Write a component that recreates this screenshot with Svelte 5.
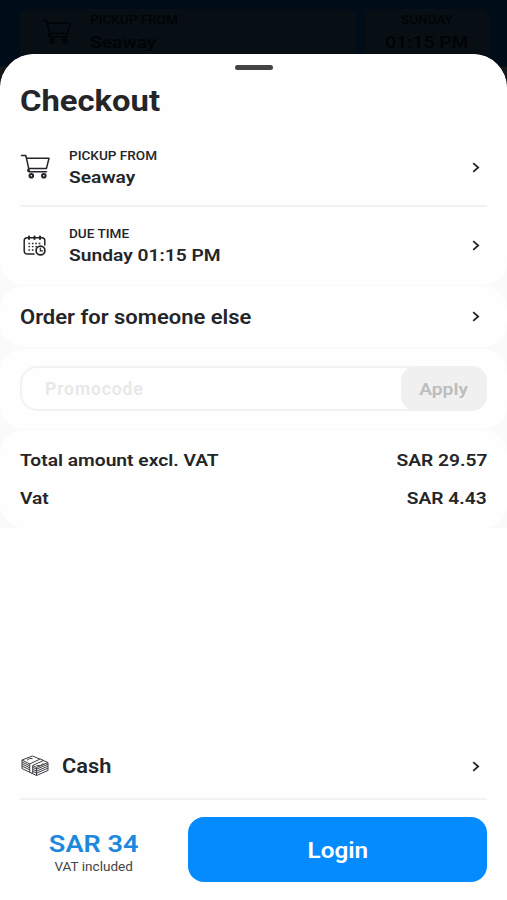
<script lang="ts">
	const details = [
		{ icon: 'cart', label: 'PICKUP FROM', value: 'Seaway' },
		{ icon: 'calendar', label: 'DUE TIME', value: 'Sunday 01:15 PM' }
	];
	const totals = [
		{ name: 'Total amount excl. VAT', amount: 'SAR 29.57' },
		{ name: 'Vat', amount: 'SAR 4.43' }
	];
	let promocode: string = $state('');
</script>

{#snippet cart()}
	<svg class="cart" width="30" height="26" viewBox="0 0 30 26" fill="none" stroke="currentColor" stroke-width="1.5" stroke-linecap="round" stroke-linejoin="round">
		<path d="M1.5 1.5h4.3l3.4 15.2M6.6 4.3h22.4l-2.6 10.3H8.8M9.2 14.6c-2 .6-1.8 3.2 0 3.2h17.3" />
		<circle cx="11.3" cy="21.7" r="1.8" stroke-width="2" />
		<circle cx="23.8" cy="21.7" r="1.8" stroke-width="2" />
	</svg>
{/snippet}

{#snippet calendar()}
	<svg width="24" height="22" viewBox="0 0 24 22" fill="none" stroke="currentColor" stroke-width="1.5" stroke-linecap="round">
		<path d="M11 19H4.5Q1.2 19 1.2 15.7V5.5Q1.2 2.7 4.2 2.7H18.8Q21.8 2.7 21.8 5.5V10" />
		<path d="M6 1.4v2.6M11.5 1.4v2.6M17 1.4v2.6" stroke-width="2" />
		<path d="M5.5 8.5h12.5M5.5 11.7h9M5.5 15h5.5" stroke-width="1.3" stroke-linecap="butt" stroke-dasharray="1.6 1.8" />
		<circle cx="17.5" cy="15.5" r="4.4" stroke-width="1.7" />
		<path d="M17.3 13v2.8h2.2" stroke-width="1.2" />
	</svg>
{/snippet}

{#snippet cash()}
	<svg width="28" height="22" viewBox="0 0 28 22" fill="none" stroke="#3c3d40" stroke-width="1" stroke-linejoin="round">
		<path d="M1 5 11.5 1 27 7.5 15.5 12.5zM1 5v8.5l14.5 7 11.5-5V7.5M15.5 12.5v8" />
		<path d="M1 7l14.5 7.2L27 9.2M1 9l14.5 7.2L27 11.2M1 11l14.5 7.2L27 13.2" />
		<path d="m8.7 9 10.5-5 3.2 1.5-10.7 5v8.2l-3-1.6z" fill="#fff" />
		<path d="M6 5.2q2.5-2.7 5.6-1.5M15.3 10.8q5 .7 7.2-2.4" />
	</svg>
{/snippet}

{#snippet chevron()}
	<svg class="chevron" width="8" height="11" viewBox="0 0 8 11" fill="none" stroke="currentColor" stroke-width="1.8">
		<path d="M1.2 1.1 6.2 5.5 1.2 9.9" />
	</svg>
{/snippet}

<div class="screen">
	<div class="behind">
		<div class="card place">
			{@render cart()}
			<div>
				<div class="small"><span class="wide">PICKUP FROM</span></div>
				<div class="value"><span class="wide">Seaway</span></div>
			</div>
		</div>
		<div class="card time">
			<div class="small"><span class="wide mid">SUNDAY</span></div>
			<div class="value"><span class="wide mid">01:15 PM</span></div>
		</div>
	</div>

	<main class="sheet">
		<section class="panel first">
			<div class="handle"></div>
			<h1><span class="wide">Checkout</span></h1>
			{#each details as detail}
				<div class="detail">
					<div class="icon">
						{#if detail.icon === 'cart'}{@render cart()}{:else}{@render calendar()}{/if}
					</div>
					<div class="grow">
						<div class="small"><span class="wide">{detail.label}</span></div>
						<div class="value"><span class="wide">{detail.value}</span></div>
					</div>
					{@render chevron()}
				</div>
			{/each}
		</section>

		<section class="panel someone">
			<div class="grow"><span class="wide">Order for someone else</span></div>
			{@render chevron()}
		</section>

		<section class="panel promo">
			<div class="field">
				<input type="text" placeholder="Promocode" bind:value={promocode} />
				<button class="apply"><span class="wide mid">Apply</span></button>
			</div>
		</section>

		<section class="panel totals">
			{#each totals as row}
				<div class="row">
					<span class="wide">{row.name}</span>
					<span class="wide end">{row.amount}</span>
				</div>
			{/each}
		</section>

		<footer>
			<div class="payment">
				{@render cash()}
				<div class="grow"><span class="wide">Cash</span></div>
				{@render chevron()}
			</div>
			<div class="pay">
				<div class="sum">
					<div class="price"><span class="wide mid">SAR 34</span></div>
					<div class="note"><span class="wide mid">VAT included</span></div>
				</div>
				<button class="login"><span class="wide mid">Login</span></button>
			</div>
		</footer>
	</main>
</div>

<style>
	:global(body) { margin: 0; }
	* { box-sizing: border-box; }
	.screen { display: flex; flex-direction: column; height: 900px; overflow: hidden; font-family: Roboto, "Liberation Sans", sans-serif; font-weight: 600; color: #242528; background: linear-gradient(#000c18 66px, #15171a 67px); }
	svg { display: block; flex: none; }
	.wide { display: inline-block; transform: scaleX(1.13); transform-origin: left center; white-space: nowrap; }
	.wide.mid { transform-origin: center; }
	.wide.end { transform-origin: right center; }
	.grow { flex: 1; }

	.behind { display: flex; gap: 9px; height: 54px; padding: 9px 18px 0 20px; color: #010305; flex: none; }
	.card { height: 60px; border-radius: 8px 8px 0 0; background: #070f15; }
	.place { display: flex; flex: 1; gap: 19px; padding: 4px 0 0 21px; }
	.place .cart { margin-top: 6px; }
	.time { width: 124px; padding-top: 4px; text-align: center; }

	.sheet { display: flex; flex-direction: column; flex: 1; border-radius: 34px 34px 0 0; overflow: hidden; background: #fafafa; }
	.panel { padding: 0 20px; background: #fefefe; border-radius: 24px; flex: none; }
	.first { height: 231px; border-radius: 34px 34px 24px 24px; }
	.handle { width: 38px; height: 5px; margin: 0 auto; border-radius: 3px; background: #444; transform: translateY(11px); }
	h1 { margin: 24px 0 0; font-size: 29px; line-height: 36px; font-weight: 700; }
	.detail { display: flex; align-items: center; height: 77px; }
	.detail:nth-of-type(2) { height: 88px; padding-top: 10px; border-bottom: 2px solid #f2f2f2; }
	.icon { width: 49px; }
	.detail:nth-of-type(3) .icon { padding-left: 3px; }
	.small { font-size: 12px; line-height: 14px; font-weight: 500; }
	.value { margin-top: 4px; font-size: 17px; line-height: 22px; }
	.detail .small { margin-top: 2px; }
	.detail .value { margin-top: 3px; }
	.chevron { margin-right: 7px; }

	.someone { display: flex; align-items: center; height: 61px; margin-top: 1px; font-size: 19.3px; }
	.someone .chevron { margin-top: -1px; }
	.someone .wide { transform: translateY(1px) scaleX(1.14); }
	.promo { height: 80px; margin-top: 2px; padding-top: 17px; }
	.field { display: flex; height: 45px; border: 2px solid #f2f2f2; border-radius: 17px; }
	input { flex: 1; min-width: 0; padding: 0 0 0 23px; border: 0; outline: 0; background: none; font: 600 17.5px Roboto, "Liberation Sans", sans-serif; letter-spacing: 0.9px; }
	input::placeholder { color: #e8e8e8; opacity: 1; }
	button { padding: 0; border: 0; font-family: inherit; font-weight: 600; }
	.apply { width: 86px; margin: -2px -2px -2px 0; border-radius: 15px; background: #f0f0f0; color: #bdbdbd; font-size: 17px; }
	.totals { height: 98px; margin-top: 1px; padding-top: 11px; font-size: 17px; }
	.row { display: flex; justify-content: space-between; height: 38px; line-height: 38px; }

	footer { display: flex; flex-direction: column; justify-content: flex-end; flex: 1; padding: 0 20px 18px; background: #fefefe; }
	.payment { display: flex; align-items: center; gap: 13px; height: 68px; padding: 2px 0 0 1px; border-bottom: 2px solid #f2f2f2; font-size: 19.3px; }
	.pay { display: flex; gap: 20px; padding-top: 17px; }
	.sum { width: 148px; padding-top: 13px; text-align: center; }
	.price { color: #1e88dc; font-size: 24px; line-height: 28px; }
	.note { margin-top: 1px; color: #444; font-size: 12px; line-height: 16px; font-weight: 400; }
	.login { flex: 1; height: 65px; padding-top: 2px; border-radius: 16px; background: #048cff; color: #fff; font-size: 21.5px; }
</style>
